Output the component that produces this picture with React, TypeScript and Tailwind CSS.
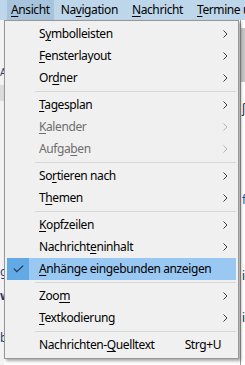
import type { ReactNode } from 'react'

type Entry =
  | { kind: 'sep' }
  | {
      kind: 'item'
      label: ReactNode
      sub?: boolean
      disabled?: boolean
      checked?: boolean
      shortcut?: string
    }

function U({ children }: { children: ReactNode }) {
  return <span className="underline underline-offset-[2px] decoration-1">{children}</span>
}

const entries: Entry[] = [
  { kind: 'item', label: <>S<U>y</U>mbolleisten</>, sub: true },
  { kind: 'item', label: <><U>F</U>ensterlayout</>, sub: true },
  { kind: 'item', label: <>Or<U>d</U>ner</>, sub: true },
  { kind: 'sep' },
  { kind: 'item', label: <><U>T</U>agesplan</>, sub: true },
  { kind: 'item', label: <><U>K</U>alender</>, sub: true, disabled: true },
  { kind: 'item', label: <>Aufga<U>b</U>en</>, sub: true, disabled: true },
  { kind: 'sep' },
  { kind: 'item', label: <>So<U>r</U>tieren nach</>, sub: true },
  { kind: 'item', label: <>T<U>h</U>emen</>, sub: true },
  { kind: 'sep' },
  { kind: 'item', label: <><U>K</U>opfzeilen</>, sub: true },
  { kind: 'item', label: <>Nachricht<U>e</U>ninhalt</>, sub: true },
  { kind: 'item', label: <><U>A</U>nhänge eingebunden anzeigen</>, checked: true },
  { kind: 'sep' },
  { kind: 'item', label: <>Zoo<U>m</U></>, sub: true },
  { kind: 'item', label: <><U>T</U>extkodierung</>, sub: true },
  { kind: 'sep' },
  { kind: 'item', label: <>Nachrichten-<U>Q</U>uelltext</>, shortcut: 'Strg+U' },
]

function Chevron({ disabled }: { disabled?: boolean }) {
  return (
    <svg width="5" height="8" viewBox="0 0 5 8" className="shrink-0">
      <path
        d="M0.5 0.5 L4 4 L0.5 7.5"
        fill="none"
        stroke={disabled ? '#b4b4b4' : '#3c3c3c'}
        strokeWidth="1"
      />
    </svg>
  )
}

function Check() {
  return (
    <svg width="11" height="8" viewBox="0 0 11 8">
      <path d="M0.8 3.6 L3.8 6.6 L10.2 0.6" fill="none" stroke="#2b3a4a" strokeWidth="1.3" />
    </svg>
  )
}

function MenuRow({ e }: { e: Extract<Entry, { kind: 'item' }> }) {
  return (
    <div
      className={`flex h-[22px] items-center ${e.checked ? 'bg-[#99c9f3]' : ''} ${
        e.disabled ? 'text-[#6d6d6d]' : 'text-black'
      }`}
    >
      <div
        className={`flex h-full w-[22px] shrink-0 items-center justify-center ${
          e.checked ? 'bg-[#62aae6]' : ''
        }`}
      >
        {e.checked && <Check />}
      </div>
      <div className="ml-[10px] flex-1 whitespace-nowrap leading-none">{e.label}</div>
      {e.sub && (
        <div className="mr-[8px]">
          <Chevron disabled={e.disabled} />
        </div>
      )}
      {e.shortcut && <div className="mr-[15px] whitespace-nowrap leading-none">{e.shortcut}</div>}
    </div>
  )
}

export default function App() {
  return (
    <div className="relative h-[365px] w-[245px] overflow-hidden bg-white font-['Noto_Sans',sans-serif] text-[12px] tracking-[-0.4px]">
      {/* menu bar */}
      <div className="flex h-[20px] items-center bg-[#bed6ea] text-black">
        <div className="ml-[7px] flex h-full items-center bg-[#a8c4dc] px-[4px]">
          <U>A</U>nsicht
        </div>
        <div className="ml-[7px]">
          Na<U>v</U>igation
        </div>
        <div className="ml-[14px]">
          <U>N</U>achricht
        </div>
        <div className="ml-[14px] whitespace-nowrap">
          <U>T</U>ermine u
        </div>
      </div>

      {/* underlying window, mostly hidden */}
      <div className="flex h-[345px]">
        <div className="flex w-[4px] flex-col bg-[#f3f3f3] text-[#1f3f6f]">
          <div className="h-[46px] shrink-0" />
          <div className="h-[12px] shrink-0 text-[10px] leading-[12px]">A</div>
          <div className="h-[7px] shrink-0" />
          <div className="h-[16px] shrink-0 bg-[#dcdcdc]" />
          <div className="h-[163px] shrink-0" />
          <div className="h-[16px] shrink-0 leading-[16px]">g</div>
          <div className="h-[8px] shrink-0" />
          <div className="h-[16px] shrink-0 font-bold leading-[16px]">w</div>
          <div className="h-[26px] shrink-0" />
          <div className="h-[16px] shrink-0 leading-[16px]">b</div>
        </div>
        <div className="flex-1" />
        <div className="flex w-[5px] flex-col border-l border-[#9a9a9a] text-[#1f1f1f]">
          <div className="h-[8px] shrink-0" />
          <div className="h-[54px] shrink-0 bg-[#c6c6c6]" />
          <div className="h-[20px] shrink-0" />
          <div className="h-[14px] shrink-0 pl-[1px] leading-[14px]">ʃ</div>
          <div className="h-[76px] shrink-0" />
          <div className="h-[16px] shrink-0 pl-[1px] leading-[16px] text-[#1f4f8f]">fi</div>
          <div className="h-[60px] shrink-0" />
          <div className="h-[16px] shrink-0 pl-[1px] leading-[16px]">ic</div>
          <div className="h-[26px] shrink-0" />
          <div className="h-[16px] shrink-0 pl-[1px] leading-[16px]">ie</div>
        </div>
      </div>

      {/* dropdown */}
      <div className="absolute left-[4px] top-[20px] w-[235px] border border-[#979797] bg-[#f0f0f0] p-[2px] shadow-[2px_2px_3px_rgba(0,0,0,0.35)]">
        {entries.map((e, i) =>
          e.kind === 'sep' ? (
            <div key={i} className="flex h-[5px] items-center pl-[28px]">
              <div className="h-px w-full bg-[#d7d7d7]" />
            </div>
          ) : (
            <MenuRow key={i} e={e} />
          ),
        )}
      </div>
    </div>
  )
}
